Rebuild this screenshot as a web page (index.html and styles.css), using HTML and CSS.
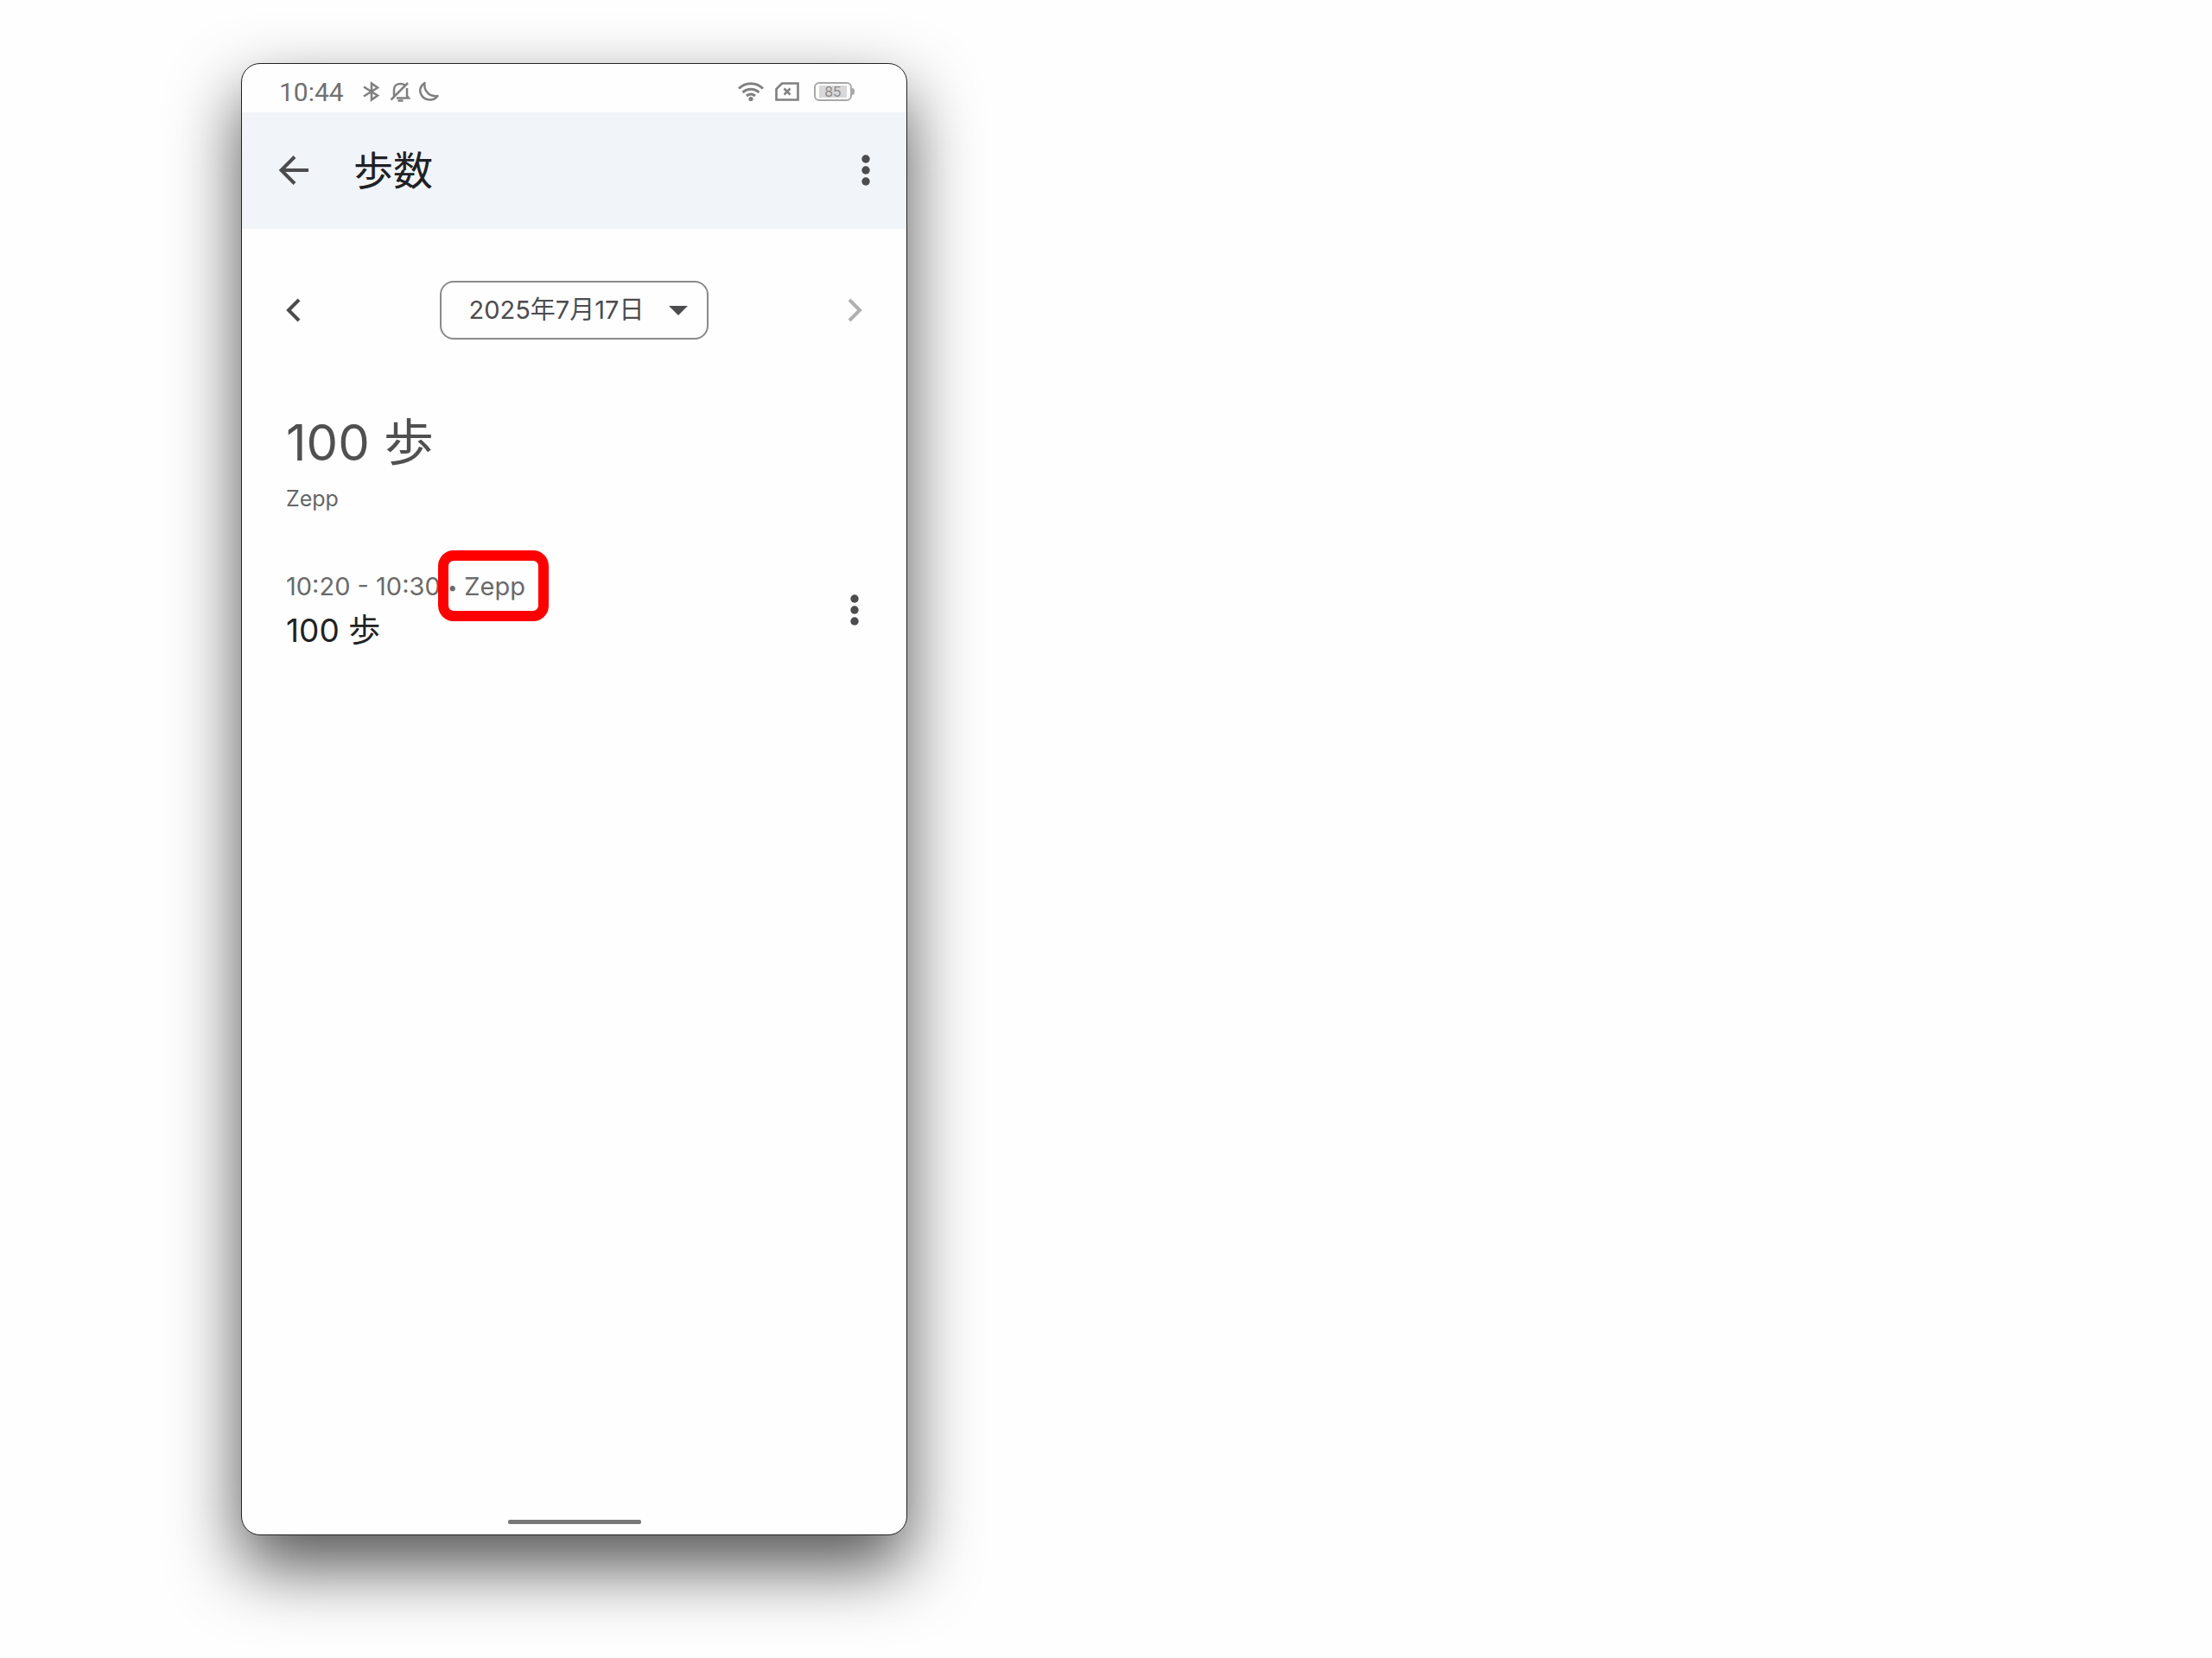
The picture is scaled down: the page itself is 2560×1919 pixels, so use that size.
FILE: index.html
```html
<!DOCTYPE html>
<html lang="ja">
<head>
<meta charset="utf-8">
<meta name="viewport" content="width=device-width, initial-scale=1">
<title>歩数</title>
<link rel="stylesheet" href="styles.css">
</head>
<body>
<main class="phone">
  <div class="status">
    <span class="time">10:44</span>
    <div class="status-left">
      <svg class="icon24" viewBox="0 0 24 24" fill="none" stroke="currentColor" stroke-width="2.600"><path d="M3 6.500 19 16.500 12 21.500V2.500L19 7.500 3 17.500"/></svg>
      <svg class="icon24" viewBox="0 0 24 24" fill="none" stroke="currentColor" stroke-width="2.500"><path d="M5 17V9.500C5 5.500 8 3 12.500 3c2 0 3.500.500 5 1.500M20 8v9l2 2.500H8M1.500 21.500 21 2M9.500 22.500h6"/></svg>
      <svg class="icon24" viewBox="0 0 24 24" fill="none" stroke="currentColor" stroke-width="2.500" stroke-linejoin="round"><path d="M7.500 2C2.500 5 .500 11 4 16.500c4 6 14 7 18.500.500C14 18.500 6 12 7.500 2z"/></svg>
    </div>
    <div class="status-right">
      <svg class="wifi" viewBox="0 0 30 24" fill="none" stroke="currentColor" stroke-width="3"><path d="M1 8.500C9 .800 21 .800 29 8.500M5.500 13c5.500-5 13.500-5 19 0M10 17c3-2.600 7-2.600 10 0"/><circle cx="15" cy="20.500" r="2.600" fill="currentColor" stroke="none"/></svg>
      <svg class="sim" viewBox="0 0 30 24" fill="none" stroke="currentColor" stroke-width="2.600"><path d="M9 2.500h18.500v19h-25V9zM11.500 8.500l7 7m0-7-7 7"/></svg>
      <div class="battery"><span class="charge">85</span></div>
    </div>
  </div>

  <header class="appbar">
    <button class="icon-button" aria-label="戻る"><svg class="icon36" viewBox="0 0 36 36" fill="none" stroke="currentColor" stroke-width="4"><path d="M35 18H4M19 2.500 3.500 18 19 33.500"/></svg></button>
    <h1 class="title">歩数</h1>
    <button class="icon-button dots" aria-label="その他"><svg class="kebab" viewBox="0 0 12 36" fill="currentColor"><circle cx="6" cy="5" r="4.700"/><circle cx="6" cy="18" r="4.700"/><circle cx="6" cy="31" r="4.700"/></svg></button>
  </header>

  <nav class="dates">
    <button class="icon-button" aria-label="前の日"><svg class="chevron" viewBox="0 0 18 28" fill="none" stroke="currentColor" stroke-width="4"><path d="M15 2 3 14l12 12"/></svg></button>
    <button class="picker"><span class="date">2025年7月17日</span><svg class="caret" viewBox="0 0 22 11" fill="currentColor"><path d="M0 0h22L11 11z"/></svg></button>
    <button class="icon-button" aria-label="次の日" disabled><svg class="chevron" viewBox="0 0 18 28" fill="none" stroke="currentColor" stroke-width="4"><path d="m3 2 12 12L3 26"/></svg></button>
  </nav>

  <section class="summary">
    <p class="total">100 歩</p>
    <p class="source">Zepp</p>
  </section>

  <section class="entry">
    <div class="entry-text">
      <p class="period">10:20 - 10:30 <span class="marked"><span class="bullet">•</span> Zepp</span></p>
      <p class="steps">100 歩</p>
    </div>
    <button class="icon-button" aria-label="記録のメニュー"><svg class="kebab" viewBox="0 0 12 36" fill="currentColor"><circle cx="6" cy="5" r="4.700"/><circle cx="6" cy="18" r="4.700"/><circle cx="6" cy="31" r="4.700"/></svg></button>
  </section>

  <div class="home"></div>
</main>
</body>
</html>
```
FILE: styles.css
```css
* { box-sizing: border-box; }

body {
  margin: 0;
  padding: 73px 24px 142px 279px;
  background: #fefefe;
  color: #505050;
  font-family: Inter, "Noto Sans CJK JP", sans-serif;
}

h1, p { margin: 0; font-weight: 400; }

svg { display: block; flex: none; }

button {
  padding: 0;
  border: 0;
  background: none;
  color: #4c4c4f;
  font: inherit;
}

.phone {
  display: flex;
  flex-direction: column;
  width: 100%;
  max-width: 771px;
  min-height: calc(100vh - 215px);
  overflow: hidden;
  border: 1px solid #222;
  border-radius: 22px;
  background: #fefefe;
  box-shadow: 0 36px 80px rgba(0, 0, 0, 0.68);
}

.status {
  display: flex;
  align-items: center;
  height: 56px;
  padding: 8px 59px 0 43px;
  color: #808080;
}

.time {
  padding-top: 2px;
  color: #707070;
  font-family: Roboto, sans-serif;
  font-size: 30px;
  line-height: 32px;
}

.status-left { display: flex; gap: 9px; margin-left: 20px; }
.status-right { display: flex; align-items: center; margin-left: auto; }
.icon24 { width: 24px; height: 24px; }
.wifi { width: 30px; height: 24px; margin-right: 12px; }
.sim { width: 30px; height: 24px; margin-right: 16px; }

.battery {
  position: relative;
  width: 44px;
  height: 22px;
  margin-right: 4px;
  padding: 2px 4px;
  border: 2px solid #a8a8a8;
  border-radius: 6px;
}

.battery::after {
  content: "";
  position: absolute;
  top: 5px;
  right: -5px;
  width: 3px;
  height: 8px;
  border-radius: 0 3px 3px 0;
  background: #a8a8a8;
}

.charge {
  display: block;
  width: 32px;
  background: #d8d8d8;
  color: #8c8c8c;
  font-size: 16px;
  line-height: 14px;
  text-align: center;
}

.appbar {
  display: flex;
  align-items: center;
  height: 135px;
  padding: 0 23px 2px 36px;
  background: #f1f4f9;
}

.title {
  margin-left: 45px;
  color: #202124;
  font-size: 46px;
  line-height: 68px;
}

.dots { margin-left: auto; }

.icon-button {
  display: flex;
  flex: none;
  align-items: center;
  justify-content: center;
  width: 48px;
  height: 48px;
}

.icon-button:disabled { color: #b0b0b0; }
.icon36 { width: 36px; height: 36px; }
.kebab { width: 12px; height: 36px; }
.chevron { width: 18px; height: 28px; }

.dates {
  display: flex;
  align-items: center;
  justify-content: space-between;
  padding: 60px 36px 0;
}

.picker {
  display: flex;
  align-items: center;
  gap: 29px;
  height: 68px;
  padding: 0 22px 0 32px;
  border: 2px solid #8a8a8a;
  border-radius: 16px;
  font-size: 29px;
}

.date { padding-bottom: 6px; }

.caret { width: 22px; height: 11px; }

.summary { padding: 77px 36px 0 51px; }

.total { font-size: 58px; line-height: 84px; }

.source { padding-top: 5px; font-size: 25px; line-height: 36px; color: #666; }

.entry {
  display: flex;
  align-items: center;
  justify-content: space-between;
  padding: 60px 36px 0 51px;
}

.period { font-size: 29px; line-height: 48px; color: #6a6a6a; }

.marked { position: relative; }

.bullet { font-size: 20px; vertical-align: 2px; }

/* Frame around the name of the app that wrote the record */
.marked::after {
  content: "";
  position: absolute;
  inset: -24px -27px -23px -11px;
  border: 12px solid #fe0000;
  border-radius: 18px;
}

.steps { color: #222; font-size: 37px; line-height: 52px; }

.home {
  width: 154px;
  height: 5px;
  margin: auto auto 12px;
  border-radius: 2px;
  background: #787878;
}
```
